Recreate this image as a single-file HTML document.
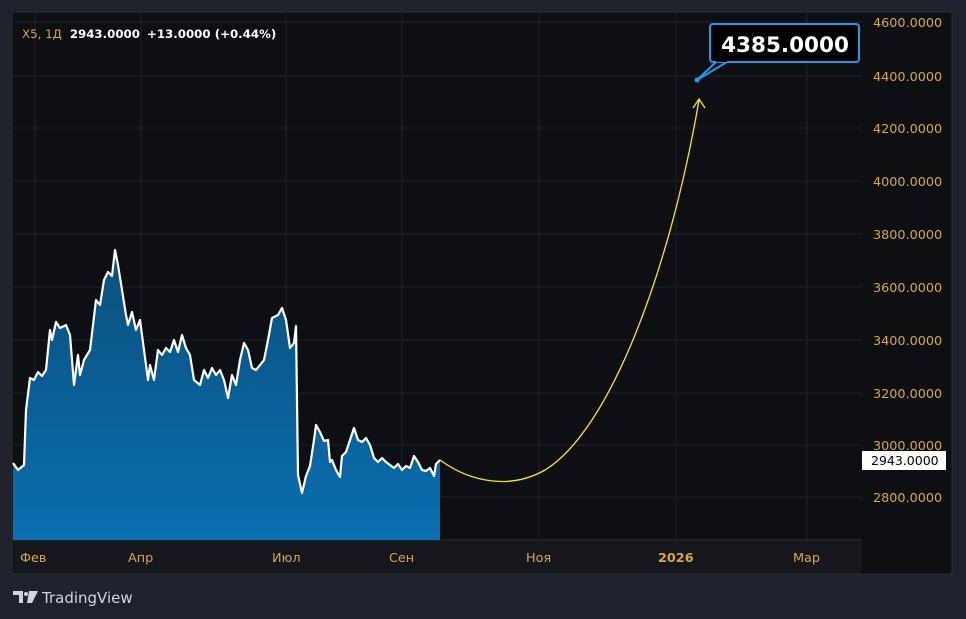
<!DOCTYPE html>
<html><head><meta charset="utf-8"><style>
body{margin:0;width:966px;height:619px;background:#1f222d;overflow:hidden;font-family:"DejaVu Sans","Liberation Sans",sans-serif}
svg{position:absolute;left:0;top:0}
svg text{font-family:"DejaVu Sans","Liberation Sans",sans-serif}
</style></head><body>
<svg width="966" height="619" viewBox="0 0 966 619">
<defs><linearGradient id="g" x1="0" y1="0" x2="0" y2="1"><stop offset="0" stop-color="#0b4f7c"/><stop offset="1" stop-color="#0a6fb0"/></linearGradient></defs>
<rect x="12" y="12" width="940" height="562" fill="#0e0f12" stroke="#2a2e39"/>
<rect x="13" y="540" width="849" height="33" fill="#15171c"/>
<rect x="862" y="13" width="89" height="560" fill="#0e0f12"/>
<g stroke="#1f2229" stroke-width="1">
<line x1="35" y1="13" x2="35" y2="540"/><line x1="141" y1="13" x2="141" y2="540"/><line x1="286" y1="13" x2="286" y2="540"/><line x1="402" y1="13" x2="402" y2="540"/><line x1="539" y1="13" x2="539" y2="540"/><line x1="676" y1="13" x2="676" y2="540"/><line x1="807" y1="13" x2="807" y2="540"/>
<line x1="13" y1="22" x2="862" y2="22"/><line x1="13" y1="76" x2="862" y2="76"/><line x1="13" y1="128" x2="862" y2="128"/><line x1="13" y1="181" x2="862" y2="181"/><line x1="13" y1="234" x2="862" y2="234"/><line x1="13" y1="287" x2="862" y2="287"/><line x1="13" y1="340" x2="862" y2="340"/><line x1="13" y1="393" x2="862" y2="393"/><line x1="13" y1="445" x2="862" y2="445"/><line x1="13" y1="497" x2="862" y2="497"/>
</g>
<line x1="13" y1="540" x2="862" y2="540" stroke="#2a2e39"/>
<path fill="url(#g)" d="M13,463 L18,470 L24,465 L26,410 L30,378 L34,380 L38,372 L42,376 L46,370 L50,330 L52,340 L56,322 L60,328 L66,325 L70,335 L74,385 L78,355 L80,375 L84,360 L90,350 L96,300 L100,305 L104,280 L108,272 L112,276 L115,250 L118,265 L122,290 L126,315 L128,325 L132,312 L136,330 L140,320 L144,350 L148,380 L150,365 L154,380 L158,350 L162,355 L166,348 L170,352 L174,340 L178,352 L182,335 L186,348 L190,355 L194,380 L200,385 L204,370 L208,378 L212,368 L216,375 L220,370 L224,380 L228,398 L232,375 L236,385 L240,360 L244,343 L248,350 L252,368 L256,370 L260,365 L264,360 L268,340 L272,318 L278,315 L282,308 L286,320 L290,348 L294,343 L296,326 L298,475 L302,493 L306,476 L310,466 L314,440 L316,425 L320,432 L324,441 L328,440 L330,462 L332,460 L336,470 L340,477 L342,456 L346,452 L350,440 L354,428 L358,440 L362,442 L366,438 L370,445 L374,458 L378,462 L382,458 L386,462 L390,465 L394,468 L398,464 L402,470 L406,466 L410,468 L414,456 L418,462 L422,470 L426,471 L430,468 L434,476 L436,464 L440,460 L440,540 L13,540 Z"/>
<path fill="none" stroke="#fff" stroke-width="2.2" stroke-linejoin="round" d="M13,463 L18,470 L24,465 L26,410 L30,378 L34,380 L38,372 L42,376 L46,370 L50,330 L52,340 L56,322 L60,328 L66,325 L70,335 L74,385 L78,355 L80,375 L84,360 L90,350 L96,300 L100,305 L104,280 L108,272 L112,276 L115,250 L118,265 L122,290 L126,315 L128,325 L132,312 L136,330 L140,320 L144,350 L148,380 L150,365 L154,380 L158,350 L162,355 L166,348 L170,352 L174,340 L178,352 L182,335 L186,348 L190,355 L194,380 L200,385 L204,370 L208,378 L212,368 L216,375 L220,370 L224,380 L228,398 L232,375 L236,385 L240,360 L244,343 L248,350 L252,368 L256,370 L260,365 L264,360 L268,340 L272,318 L278,315 L282,308 L286,320 L290,348 L294,343 L296,326 L298,475 L302,493 L306,476 L310,466 L314,440 L316,425 L320,432 L324,441 L328,440 L330,462 L332,460 L336,470 L340,477 L342,456 L346,452 L350,440 L354,428 L358,440 L362,442 L366,438 L370,445 L374,458 L378,462 L382,458 L386,462 L390,465 L394,468 L398,464 L402,470 L406,466 L410,468 L414,456 L418,462 L422,470 L426,471 L430,468 L434,476 L436,464 L440,460"/>
<path fill="none" stroke="#f5e52a" stroke-width="1.3" d="M440,460 C470,482 510,490 545,470 C610,430 670,270 699,100"/>
<path fill="none" stroke="#f5e52a" stroke-width="1.3" d="M693,108 L699,99 L705,108"/>
<path d="M697,80 L716,62 L727,62 Z" fill="#0d0d0d" stroke="#1e9bef" stroke-width="2"/>
<rect x="710" y="24" width="149" height="38" rx="3" fill="#000" stroke="#1e9bef" stroke-width="2"/>
<path d="M716,61 L727,61" stroke="#000" stroke-width="2"/>
<circle cx="697" cy="80" r="2.5" fill="#1e9bef"/>
<text x="785" y="52" fill="#fff" font-size="21.5" font-weight="bold" text-anchor="middle">4385.0000</text>
<text x="22" y="38" font-size="11.8"><tspan fill="#d8a83a">X5, 1Д</tspan><tspan fill="#fff" dx="8" font-weight="bold">2943.0000</tspan><tspan fill="#fff" dx="7" font-weight="bold">+13.0000 (+0.44%)</tspan></text>
<g fill="#d8a83a" font-size="12.8">
<text x="873" y="27">4600.0000</text><text x="873" y="81">4400.0000</text><text x="873" y="133">4200.0000</text><text x="873" y="186">4000.0000</text><text x="873" y="239">3800.0000</text><text x="873" y="292">3600.0000</text><text x="873" y="345">3400.0000</text><text x="873" y="398">3200.0000</text><text x="873" y="450">3000.0000</text><text x="873" y="502">2800.0000</text>
<text x="20" y="562">Фев</text><text x="128" y="562">Апр</text><text x="272" y="562">Июл</text><text x="389" y="562">Сен</text><text x="526" y="562">Ноя</text><text x="658" y="562" font-weight="bold">2026</text><text x="793" y="562">Мар</text>
</g>
<rect x="862" y="451" width="84" height="19" fill="#fff"/>
<text x="871" y="465" font-size="12.5" fill="#000">2943.0000</text>
<g fill="#d1d4dc"><path d="M13,591 H23 V603 H19 V595 H13 Z"/><circle cx="26" cy="594" r="2"/><path d="M29,591 H38 L32,603 H27 Z"/></g>
<text x="42" y="603" font-size="15" fill="#d1d4dc">TradingView</text>
</svg>
</body></html>
